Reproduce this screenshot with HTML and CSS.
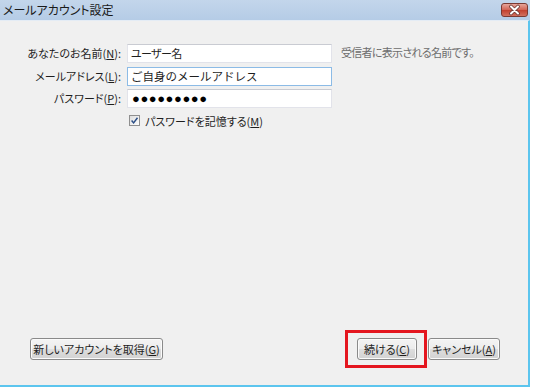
FILE: index.html
```html
<!DOCTYPE html>
<html lang="ja">
<head>
<meta charset="utf-8">
<link rel="stylesheet" href="styles.css">
</head>
<body>
<div class="window">
  <div class="titlebar">
    <span class="title">メールアカウント設定</span>
    <span class="close">
      <svg width="27" height="14" viewBox="0 0 27 14">
        <path d="M10 3.5 L17 10.5 M17 3.5 L10 10.5" stroke="#6e3a35" stroke-width="3.6" stroke-linecap="round"/>
        <path d="M10 3.5 L17 10.5 M17 3.5 L10 10.5" stroke="#ffffff" stroke-width="2" stroke-linecap="round"/>
      </svg>
    </span>
  </div>
  <div class="body">
    <div class="form">
      <label class="label">あなたのお名前(<u>N</u>):</label>
      <div class="field name">ユーザー名</div>
      <span class="hint">受信者に表示される名前です。</span>

      <label class="label">メールアドレス(<u>L</u>):</label>
      <div class="field focus plain">ご自身のメールアドレス</div>
      <span></span>

      <label class="label">パスワード(<u>P</u>):</label>
      <div class="field dots">●●●●●●●●●</div>
      <span></span>

      <div class="remember">
        <svg class="check" width="11" height="11" viewBox="0 0 11 11">
          <defs>
            <linearGradient id="cb" x1="0" y1="0" x2="1" y2="1">
              <stop offset="0" stop-color="#dcdcdc"/>
              <stop offset="1" stop-color="#ffffff"/>
            </linearGradient>
          </defs>
          <rect x="0.5" y="0.5" width="10" height="10" fill="url(#cb)" stroke="#8f8f8f"/>
          <path d="M2.6 5.6 L4.6 7.9 L8.5 2.8" fill="none" stroke="#2b4e86" stroke-width="1.5"/>
        </svg>
        <span>パスワードを記憶する(<u>M</u>)</span>
      </div>
    </div>

    <div class="footer">
      <button class="btn btn-new">新しいアカウントを取得(<u>G</u>)</button>
      <div class="actions">
        <div class="mark">
          <button class="btn btn-next">続ける(<u>C</u>)</button>
        </div>
        <button class="btn btn-cancel">キャンセル(<u>A</u>)</button>
      </div>
    </div>
  </div>
</div>
</body>
</html>
```

FILE: styles.css
```css
html, body {
  margin: 0;
  background: #ffffff;
}

body {
  font-family: "Noto Sans CJK JP", "Noto Sans", sans-serif;
  font-size: 11px;
  font-feature-settings: "palt";
  color: #1e1e1e;
}

.window {
  width: 530px;
}

.titlebar {
  height: 20px;
  box-sizing: border-box;
  background: linear-gradient(#c3d6eb, #b5cce6);
  display: flex;
  align-items: center;
  justify-content: space-between;
  padding-left: 3px;
  padding-right: 2px;
}

.title {
  font-size: 12px;
  color: #1a1a1a;
  line-height: 20px;
}

.close {
  width: 27px;
  height: 14px;
  box-sizing: border-box;
  border: 1px solid #7b3a33;
  border-radius: 3px;
  background: linear-gradient(#e6a59b, #d26556 48%, #c2402f 52%, #d2705f);
  display: flex;
  align-items: center;
  justify-content: center;
  overflow: hidden;
}

.close svg {
  flex: none;
}

.body {
  height: 364px;
  background: #f0f0f0;
  border-top: 1px solid #e4ecf5;
  border-right: 2px solid #5cc5ee;
  border-bottom: 2px solid #5cc5ee;
  display: flex;
  flex-direction: column;
}

.form {
  display: grid;
  grid-template-columns: 121px 205px auto;
  column-gap: 6px;
  row-gap: 3.5px;
  margin-top: 23px;
  grid-auto-rows: 19px;
}

.label {
  text-align: right;
  line-height: 19px;
  white-space: nowrap;
  color: #1e1e1e;
}

.field {
  height: 19px;
  box-sizing: border-box;
  background: #ffffff;
  border: 1px solid #e2e3ea;
  border-top-color: #c9cbd2;
  padding-left: 3px;
  line-height: 17px;
  white-space: nowrap;
  overflow: hidden;
  color: #1e1e1e;
}

.field.name {
  letter-spacing: -0.6px;
}

.field.focus {
  border-color: #8cbbe6;
}

.field.plain {
  font-feature-settings: normal;
  font-size: 11.5px;
}

.field.dots {
  font-family: "Liberation Sans", sans-serif;
  font-size: 13px;
  letter-spacing: 0.55px;
  padding-left: 4px;
  color: #000000;
}

.hint {
  margin-left: 3px;
  line-height: 17px;
  color: #6d6d6d;
  white-space: nowrap;
  letter-spacing: -0.7px;
}

.remember {
  grid-column: 2 / span 2;
  display: flex;
  align-items: center;
  gap: 5px;
  margin-top: 2px;
  height: 14px;
  padding-left: 2px;
  white-space: nowrap;
}

.check {
  flex: none;
}

.footer {
  margin-top: auto;
  display: flex;
  justify-content: space-between;
  align-items: center;
  padding: 0 28px 17px 30px;
}

.actions {
  display: flex;
  align-items: center;
}

.btn {
  height: 22px;
  box-sizing: border-box;
  border: 1px solid #8a8a8a;
  border-radius: 3px;
  background: linear-gradient(#f4f4f4, #ececec 50%, #dedede 50%, #d2d2d2);
  box-shadow: inset 0 0 0 1px #fbfbfb;
  font-family: inherit;
  font-size: 11px;
  font-feature-settings: "palt";
  color: #1e1e1e;
  padding: 0;
  line-height: 20px;
  text-align: center;
  white-space: nowrap;
}

.btn-new {
  width: 133px;
}

.btn-next {
  width: 60px;
  display: block;
}

.btn-cancel {
  width: 72px;
  margin-left: 1px;
}

.mark {
  border: 3px solid #e4161f;
  padding: 5px 7px 5px 9px;
}
```
